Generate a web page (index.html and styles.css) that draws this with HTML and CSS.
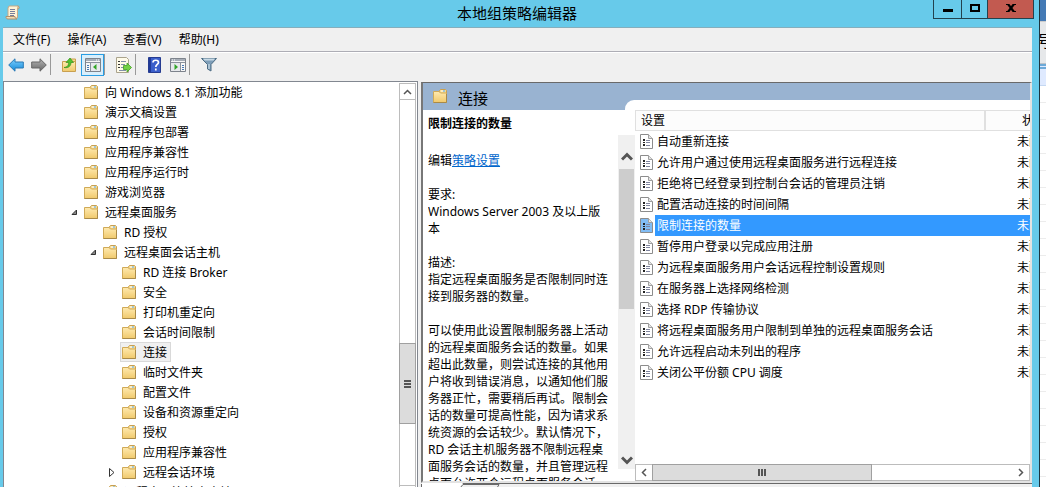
FILE: index.html
```
<!DOCTYPE html>
<html lang="zh-CN">
<head>
<meta charset="utf-8">
<title>本地组策略编辑器</title>
<link rel="stylesheet" href="styles.css">
</head>
<body>
<svg class="defs" aria-hidden="true">
  <defs>
    <linearGradient id="gold" x1="0" y1="0" x2="0" y2="1"><stop offset="0" stop-color="#ffeab0"/><stop offset="1" stop-color="#f0c96c"/></linearGradient>
    <linearGradient id="sky" x1="0" y1="0" x2="0" y2="1"><stop offset="0" stop-color="#7fd0ff"/><stop offset="1" stop-color="#1188d8"/></linearGradient>
    <linearGradient id="steel" x1="0" y1="0" x2="0" y2="1"><stop offset="0" stop-color="#b5b5b5"/><stop offset="1" stop-color="#666"/></linearGradient>
    <symbol id="folder" viewBox="0 0 15 14">
      <path d="M6.500 2.500V1.500L7.500 .5h5l1 1v3h-7z" fill="#f6d98e" stroke="#c9a050"/>
      <path d="M8 2h4" stroke="#fff"/><path d="M10 2h2" stroke="#4aa0dc"/>
      <path d="M.5 2.500H6l1.500 1.500h6v9.500H.5z" fill="url(#gold)" stroke="#d0aa58"/>
      <path d="M.5 13.500h13V5" fill="none" stroke="#a98a48"/>
    </symbol>
    <symbol id="sheet" viewBox="0 0 13 15">
      <path d="M.5.5h8l4 4v10H.5z" fill="currentColor" stroke="#8c8c8c"/>
      <path d="M8.500.5v4h4" fill="#e4e4e4" stroke="#a0a0a0"/>
      <path d="M3 5h2v2H3zM3 8h2v1H3zM3 10h2v2H3z" fill="#222"/>
      <path d="M6 6.500H10M6 8.500H10M6 11.500H10" stroke="#8186a0"/>
    </symbol>
    <symbol id="arrow" viewBox="0 0 16 14">
      <path d="M.7 7 7 .8V4h8.300v6H7v3.200z"/>
    </symbol>
    <symbol id="pane" viewBox="0 0 16 14">
      <path d="M.5.5h15v13H.5z" fill="#f7f7f7" stroke="#7d838c"/>
      <path d="M1 1h14v2H1z" fill="#a6adb7"/><path d="M11 2h1m1 0h1" stroke="#fff"/>
      <path d="M1 4.500h14M5.500 5v8" stroke="#8b929c"/>
      <path d="M2 7.500h2M2 9.500h2M2 11.500h2" stroke="#4679b5"/>
      <path d="M6 5h9v8H6z" fill="#e7e9ec"/><path d="M11.500 6v6L8 9z" fill="#32a528"/>
    </symbol>
    <symbol id="up" viewBox="0 0 9 6"><path d="m1 5 3.500-3.500L8 5" fill="none" stroke="#555" stroke-width="1.500"/></symbol>
  </defs>
</svg>
<div class="window">
  <header class="titlebar">
    <svg class="app-icon" width="15" height="15" viewBox="0 0 15 15"><path d="M4 1h9.500L12.500 3v10H3V3z" fill="#fff3d6" stroke="#c5a987"/><path d="M12.500 1c2 0 2 3 .5 3M1 11.500h9c0 1.500 1 2.500 2 2.500H3c-2 0-2-1.500-2-2.500z" fill="#f3ddb5" stroke="#b1906c"/><path d="M5 4.500h5M5 6.500h5M5 8.500h5M5 10.500h4" stroke="#787f9c"/></svg>
    <h1>本地组策略编辑器</h1>
    <div class="window-buttons">
      <button class="minimize" aria-label="最小化"><svg width="10" height="10"><path d="M0 6h10v3H0z"/></svg></button>
      <button class="maximize" aria-label="最大化"><svg width="10" height="8"><path d="M1 1h8v6H1z" fill="none" stroke="#000" stroke-width="2"/></svg></button>
      <button class="close" aria-label="关闭"><svg width="10" height="8"><path d="m2 0 6 8M8 0 2 8" stroke="#000" stroke-width="2.200"/><path d="M0 0h3v1H0zM7 0h3v1H7zM0 7h3v1H0zM7 7h3v1H7z"/></svg></button>
    </div>
  </header>
  <nav class="menu">
    <button>文件(F)</button><button>操作(A)</button><button>查看(V)</button><button>帮助(H)</button>
  </nav>
  <div class="toolbar">
    <button aria-label="后退"><svg width="16" height="14" fill="url(#sky)" stroke="#2878b5"><use href="#arrow"/></svg></button>
    <button aria-label="前进"><svg class="flip" width="16" height="14" fill="url(#steel)" stroke="#666"><use href="#arrow"/></svg></button>
    <hr>
    <button aria-label="上移一级"><svg width="15" height="15" viewBox="0 0 15 15"><path d="M8 3.500V2h5.500v3" fill="#f6d98e" stroke="#c9a050"/><path d="M.5 4.500h13v10H.5z" fill="url(#gold)" stroke="#c9a050"/><path d="M2 10.500c4-.5 4.500-2.500 4.500-5H4L8 1l3.500 4.500H9c0 3-2 6-7 5z" fill="#54c12e" stroke="#34911b" stroke-width=".7"/></svg></button>
    <button class="pressed" aria-label="显示/隐藏控制台树"><svg width="16" height="14"><use href="#pane"/></svg></button>
    <hr>
    <button aria-label="导出列表"><svg width="16" height="16" viewBox="0 0 16 16"><path d="M.5.5h10l2 2v13H.5z" fill="#fffbe9" stroke="#aaa38c"/><path d="M2 4h2v1H2zM2 7h2v1H2zM2 10h2v1H2z" fill="#333"/><path d="M5 4.500h5M5 7.500h4M5 10.500h3M3 13.500h7" stroke="#8290a8"/><path d="M7.500 8.500H11V6l4.500 4.500L11 15v-2.500H7.500z" fill="#73d145" stroke="#42a024" stroke-width=".8"/></svg></button>
    <hr>
    <button aria-label="帮助"><svg width="13" height="16" viewBox="0 0 13 16"><path d="M.5.5h12v15H.5z" fill="#3b5fcb" stroke="#263c91"/><path d="M1 1h2v14H1z" fill="#203a98"/><path d="M5 5.500C5 2.500 10.500 2.500 10.500 5.500c0 2-2.700 2-2.700 4.500M7.800 11.500v2" fill="none" stroke="#fff" stroke-width="1.700"/></svg></button>
    <button aria-label="显示/隐藏操作窗格"><svg class="flip" width="16" height="14"><use href="#pane"/></svg></button>
    <hr>
    <button aria-label="筛选器"><svg width="16" height="15" viewBox="0 0 16 15"><path d="M.5 1.500h15L10 7.500V14l-3.500-2V7.500z" fill="#7d9db7" stroke="#4d6c84"/><path d="M2 1.500h12l-1.500 2h-9z" fill="#c7d9e5"/><path d="M8 7v5" stroke="#dceaf2"/></svg></button>
  </div>
  <main class="panes">
    <section class="tree-pane">
      <ul class="tree">
        <li><svg class="folder"><use href="#folder"/></svg>向 Windows 8.1 添加功能</li>
        <li><svg class="folder"><use href="#folder"/></svg>演示文稿设置</li>
        <li><svg class="folder"><use href="#folder"/></svg>应用程序包部署</li>
        <li><svg class="folder"><use href="#folder"/></svg>应用程序兼容性</li>
        <li><svg class="folder"><use href="#folder"/></svg>应用程序运行时</li>
        <li><svg class="folder"><use href="#folder"/></svg>游戏浏览器</li>
        <li class="branch"><button class="twisty" aria-label="折叠"><svg width="7" height="7"><path d="M5.500 1v4.500H1z" fill="#888" stroke="#333"/></svg></button><svg class="folder"><use href="#folder"/></svg>远程桌面服务</li>
        <li class="level-2"><svg class="folder"><use href="#folder"/></svg>RD 授权</li>
        <li class="level-2 branch"><button class="twisty" aria-label="折叠"><svg width="7" height="7"><path d="M5.500 1v4.500H1z" fill="#888" stroke="#333"/></svg></button><svg class="folder"><use href="#folder"/></svg>远程桌面会话主机</li>
        <li class="level-3"><svg class="folder"><use href="#folder"/></svg>RD 连接 Broker</li>
        <li class="level-3"><svg class="folder"><use href="#folder"/></svg>安全</li>
        <li class="level-3"><svg class="folder"><use href="#folder"/></svg>打印机重定向</li>
        <li class="level-3"><svg class="folder"><use href="#folder"/></svg>会话时间限制</li>
        <li class="level-3 current"><span><svg class="folder"><use href="#folder"/></svg>连接</span></li>
        <li class="level-3"><svg class="folder"><use href="#folder"/></svg>临时文件夹</li>
        <li class="level-3"><svg class="folder"><use href="#folder"/></svg>配置文件</li>
        <li class="level-3"><svg class="folder"><use href="#folder"/></svg>设备和资源重定向</li>
        <li class="level-3"><svg class="folder"><use href="#folder"/></svg>授权</li>
        <li class="level-3"><svg class="folder"><use href="#folder"/></svg>应用程序兼容性</li>
        <li class="level-3 branch"><button class="twisty" aria-label="展开"><svg width="6" height="9"><path d="m.5.5 4.500 4-4.500 4z" fill="#fff" stroke="#333"/></svg></button><svg class="folder"><use href="#folder"/></svg>远程会话环境</li>
        <li class="level-2"><svg class="folder"><use href="#folder"/></svg>远程桌面连接客户端</li>
      </ul>
      <div class="scroll-y">
        <button aria-label="向上滚动"><svg width="9" height="6"><use href="#up"/></svg></button>
        <div class="track"><div class="thumb"><svg width="7" height="8"><path d="M0 1h7M0 4h7M0 7h7" stroke="#555" stroke-width="2"/></svg></div></div>
        <div class="end"></div>
      </div>
    </section>
    <section class="result">
      <div class="result-box">
        <div class="banner"><svg class="folder"><use href="#folder"/></svg><h2>连接</h2></div>
        <div class="columns">
          <article class="detail">
            <h3>限制连接的数量</h3>
            <div class="detail-body">
              <div class="prose">
                <p>编辑<a href="#">策略设置</a></p>
                <p>要求:<br>Windows Server 2003 及以上版<br>本</p>
                <p>描述:<br>指定远程桌面服务是否限制同时连<br>接到服务器的数量。</p>
                <p>可以使用此设置限制服务器上活动<br>的远程桌面服务会话的数量。如果<br>超出此数量，则尝试连接的其他用<br>户将收到错误消息，以通知他们服<br>务器正忙，需要稍后再试。限制会<br>话的数量可提高性能，因为请求系<br>统资源的会话较少。默认情况下，<br>RD 会话主机服务器不限制远程桌<br>面服务会话的数量，并且管理远程<br>桌面允许两个远程桌面服务会话。</p>
              </div>
              <div class="soft-scroll">
                <button aria-label="向上滚动"><svg width="12" height="9"><path d="m1 7.500 5-5 5 5" fill="none" stroke="#555" stroke-width="3"/></svg></button>
                <div class="soft-thumb"></div>
                <button class="down" aria-label="向下滚动"><svg width="12" height="9"><path d="m1 1.500 5 5 5-5" fill="none" stroke="#555" stroke-width="3"/></svg></button>
              </div>
            </div>
          </article>
          <div class="list-pane">
            <table class="list">
              <thead><tr><th>设置</th><th class="state">状态</th></tr></thead>
              <tbody>
                <tr><td><svg><use href="#sheet"/></svg><span>自动重新连接</span></td><td class="state">未配置</td></tr>
                <tr><td><svg><use href="#sheet"/></svg><span>允许用户通过使用远程桌面服务进行远程连接</span></td><td class="state">未配置</td></tr>
                <tr><td><svg><use href="#sheet"/></svg><span>拒绝将已经登录到控制台会话的管理员注销</span></td><td class="state">未配置</td></tr>
                <tr><td><svg><use href="#sheet"/></svg><span>配置活动连接的时间间隔</span></td><td class="state">未配置</td></tr>
                <tr class="selected"><td><svg><use href="#sheet"/></svg><span>限制连接的数量</span></td><td class="state">未配置</td></tr>
                <tr><td><svg><use href="#sheet"/></svg><span>暂停用户登录以完成应用注册</span></td><td class="state">未配置</td></tr>
                <tr><td><svg><use href="#sheet"/></svg><span>为远程桌面服务用户会话远程控制设置规则</span></td><td class="state">未配置</td></tr>
                <tr><td><svg><use href="#sheet"/></svg><span>在服务器上选择网络检测</span></td><td class="state">未配置</td></tr>
                <tr><td><svg><use href="#sheet"/></svg><span>选择 RDP 传输协议</span></td><td class="state">未配置</td></tr>
                <tr><td><svg><use href="#sheet"/></svg><span>将远程桌面服务用户限制到单独的远程桌面服务会话</span></td><td class="state">未配置</td></tr>
                <tr><td><svg><use href="#sheet"/></svg><span>允许远程启动未列出的程序</span></td><td class="state">未配置</td></tr>
                <tr><td><svg><use href="#sheet"/></svg><span>关闭公平份额 CPU 调度</span></td><td class="state">未配置</td></tr>
              </tbody>
            </table>
            <div class="scroll-x">
              <button aria-label="向左滚动"><svg width="6" height="9"><path d="M5 1 1.500 4.500 5 8" fill="none" stroke="#555" stroke-width="1.500"/></svg></button>
              <div class="thumb"><svg width="8" height="7"><path d="M1 0v7M4 0v7M7 0v7" stroke="#555" stroke-width="2"/></svg></div>
              <button aria-label="向右滚动"><svg width="6" height="9"><path d="M1 1l3.500 3.500L1 8" fill="none" stroke="#555" stroke-width="1.500"/></svg></button>
            </div>
          </div>
        </div>
      </div>
      <div class="tabs"><svg width="80" height="5"><path d="M0 0h42l-3 5H1z" fill="#fff"/><path d="M42 1.500h36L76 5M42 1.500 39 5M.5 1v4" fill="none" stroke="#696969"/></svg></div>
    </section>
  </main>
</div>
<aside class="behind"><div class="behind-title"></div><div class="behind-head">号</div><div class="behind-band"></div><div class="behind-rows"></div></aside>
</body>
</html>
```
FILE: styles.css
```
* { box-sizing: border-box; }
body {
  margin: 0;
  display: flex;
  height: 100vh;
  overflow: hidden;
  font: 12px/17px "Noto Sans", "Noto Sans CJK SC", sans-serif;
  color: #000;
  background: #fff;
}
h1, h2, h3, p, ul { margin: 0; padding: 0; font-weight: normal; }
button {
  display: flex;
  align-items: center;
  justify-content: center;
  padding: 0;
  border: 0;
  background: none;
  color: inherit;
  font: inherit;
}
svg { display: block; flex: none; }
.defs { position: absolute; width: 0; height: 0; }
.folder { width: 15px; height: 14px; }
.flip { transform: scaleX(-1); }

.window {
  flex: 1;
  min-width: 0;
  display: flex;
  flex-direction: column;
  padding-left: 3px;
  background: #67caea;
  border-right: 1px solid #1d3540;
}
.titlebar {
  display: grid;
  grid-template-columns: 1fr auto 1fr;
  height: 27px;
  flex: none;
  margin-right: 5px;
  margin-left: -3px;
}
.app-icon { margin: 5px; }
.titlebar h1 { font-size: 15px; line-height: 26px; }
.window-buttons { display: flex; justify-self: end; height: 19px; }
.window-buttons button { border: 1px solid #23424e; border-top: 0; height: 19px; padding-bottom: 3px; }
.minimize { width: 29px; }
.maximize { width: 27px; margin-left: -1px; }
.close { width: 47px; margin-left: -1px; }
.window-buttons .close { background: #c25a50; }

.menu, .toolbar, .panes { margin-right: 7px; background: #f0f0f0; }
.menu {
  display: flex;
  flex: none;
  gap: 17px;
  height: 25px;
  padding: 0 10px;
  border-top: 1px solid #85aebc;
  border-bottom: 1px solid #adadb5;
}
.toolbar {
  display: flex;
  flex: none;
  align-items: center;
  height: 29px;
  padding: 0 1px 5px;
  border-top: 1px solid #fff;
}
.toolbar button { width: 23px; height: 22px; }
.toolbar .pressed { border: 1px solid #2a9ee4; background: #d9effc; }
.toolbar hr { width: 1px; height: 21px; margin: 0 7px 0 0; border: 0; background: #999; }

.panes {
  flex: 1;
  min-height: 0;
  display: grid;
  grid-template-columns: 415px minmax(0, 1fr);
  grid-template-rows: minmax(0, 1fr);
  gap: 3px;
}
.tree-pane {
  display: flex;
  min-height: 0;
  overflow: hidden;
  background: #fff;
  border: solid #828790;
  border-width: 1px 1px 0;
}
.tree { flex: 1; list-style: none; overflow: hidden; }
.tree li {
  display: flex;
  align-items: center;
  gap: 6px;
  height: 20px;
  padding-left: 80px;
  white-space: nowrap;
}
.tree .level-2 { padding-left: 99px; }
.tree .level-3 { padding-left: 118px; }
.twisty { width: 10px; margin: 0 -1px 0 -15px; }
.current span {
  display: flex;
  align-items: center;
  gap: 6px;
  height: 20px;
  margin-left: -2px;
  padding: 0 3px 0 1px;
  border: 1px solid #d9d9d9;
  background: #f0f0f0;
}
.scroll-y { display: flex; flex-direction: column; width: 17px; margin: 1px 1px 0 0; border: 1px solid #bcbcbc; border-bottom: 0; }
.scroll-y button { height: 16px; border-bottom: 1px solid #bcbcbc; }
.track { flex: 1; display: flex; flex-direction: column; justify-content: flex-end; padding-bottom: 61px; }
.thumb { display: flex; align-items: center; justify-content: center; background: #dcdcdc; border: 1px solid #a0a0a0; }
.track .thumb { height: 81px; margin: 0 -1px; }
.end { height: 2px; border-top: 1px solid #bcbcbc; }

.result { display: flex; flex-direction: column; min-width: 0; padding-top: 1px; }
.result-box {
  flex: 1;
  min-height: 0;
  display: flex;
  flex-direction: column;
  background: #fff;
  border: 2px solid #696969;
  border-top-width: 1px;
  border-left-color: #777;
  border-right-color: #e3e3e3;
  border-bottom-color: #e3e3e3;
}
.banner {
  position: relative;
  display: flex;
  flex: none;
  gap: 10px;
  height: 27px;
  padding: 6px 10px 0;
  background: #99b3d1;
}
.banner h2 { font-size: 15px; line-height: 19px; }
.banner::after {
  content: "";
  position: absolute;
  left: 202px;
  right: 0;
  bottom: 0;
  height: 10px;
  border-top-left-radius: 9px;
  background: #fff;
}
.columns { flex: 1; min-height: 0; display: flex; }
.detail { display: flex; flex-direction: column; width: 212px; flex: none; padding-left: 5px; }
.detail h3 { font-size: 12px; font-weight: bold; line-height: 25px; padding-top: 1px; flex: none; }
.detail-body { display: flex; flex: 1; min-height: 0; margin-top: -1px; }
.prose { flex: 1; padding-top: 17px; white-space: nowrap; overflow: hidden; }
.prose p { margin-bottom: 17px; }
.prose a { color: #0066cc; }
.soft-scroll { display: flex; flex-direction: column; width: 17px; margin-bottom: 12px; background: #f0f0f0; }
.soft-scroll button { height: 34px; padding-top: 8px; }
.soft-scroll .down { height: 18px; margin-top: auto; padding: 0; }
.soft-thumb { height: 140px; margin: 0 1px; background: #cdcdcd; }
.list-pane { flex: 1; min-width: 0; display: flex; flex-direction: column; justify-content: space-between; }
.list { width: 100%; table-layout: fixed; border-collapse: separate; border-spacing: 0; }
.list th {
  height: 21px;
  padding: 0 5px;
  text-align: left;
  font-weight: normal;
  background: #fcfcfc;
  border: 1px solid #e0e0e0;
  border-right: 0;
}
.list .state { width: 46px; padding: 0 0 0 33px; overflow: hidden; white-space: nowrap; }
.list th.state { padding-left: 36px; border-left-width: 2px; }
.list td { height: 21px; padding: 0; }
.list td:first-child { display: flex; align-items: center; padding-left: 5px; gap: 2px; }
.list td svg { width: 13px; height: 15px; color: #fff; }
.list td span { flex: 1; line-height: 21px; padding-left: 2px; white-space: nowrap; overflow: hidden; }
.selected span, .selected .state { background: #3399ff; color: #fff; }
.list .selected svg { color: #82bdf5; }
.scroll-x { display: flex; height: 17px; border: 1px solid #bcbcbc; }
.scroll-x button { width: 16px; }
.scroll-x .thumb { flex: 0 0 220px; margin: -1px auto -1px 0; }
.tabs { height: 4px; flex: none; border-top: 1px solid #696969; background: #f0f0f0; }
.tabs svg { margin-top: -1px; }

.behind { width: 6px; flex: none; display: flex; flex-direction: column; overflow: hidden; }
.behind-title { height: 22px; flex: none; background: #447ab5; border-bottom: 1px solid #ccc; }
.behind-head { height: 42px; flex: none; padding-top: 11px; font-size: 16px; text-indent: -3px; background: #e6e8ea; border-bottom: 1px solid #bcc2c8; }
.behind-band { height: 22px; flex: none; background: #dfeaff; border: solid #c5d8f2; border-width: 0 0 1px; border-top: 5px double #6ca9d8; }
.behind-rows { flex: 1; background: repeating-linear-gradient(#fff 0 16px, #ececec 16px 17px); }
```
